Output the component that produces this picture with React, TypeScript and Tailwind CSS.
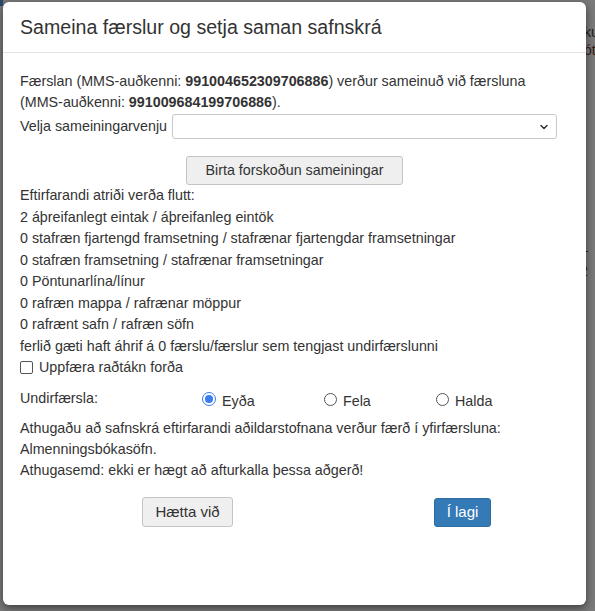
import { ChevronDown } from 'lucide-react';

const items = [
  'Eftirfarandi atriði verða flutt:',
  '2 áþreifanlegt eintak / áþreifanleg eintök',
  '0 stafræn fjartengd framsetning / stafrænar fjartengdar framsetningar',
  '0 stafræn framsetning / stafrænar framsetningar',
  '0 Pöntunarlína/línur',
  '0 rafræn mappa / rafrænar möppur',
  '0 rafrænt safn / rafræn söfn',
  'ferlið gæti haft áhrif á 0 færslu/færslur sem tengjast undirfærslunni',
];

function Radio({ label, checked }: { label: string; checked?: boolean }) {
  return (
    <label className="flex items-center gap-[6px]">
      {checked ? (
        <span className="flex h-[14px] w-[14px] items-center justify-center rounded-full border-[1.5px] border-[#3b7cf0]">
          <span className="h-[8px] w-[8px] rounded-full bg-[#3b7cf0]" />
        </span>
      ) : (
        <span className="h-[13px] w-[13px] rounded-full border border-[#555]" />
      )}
      <span className="mt-[3px]">{label}</span>
    </label>
  );
}

export default function App() {
  return (
    <div className="relative h-[611px] w-[595px] overflow-hidden bg-[#7a7a7a] font-['Liberation_Sans',Arial,sans-serif] text-[14.3px] text-[#333]">
      {/* page behind the overlay */}
      <div className="absolute left-[584px] top-[22px] text-[14px] text-[#1a1a1a]">ku</div>
      <div className="absolute left-[584px] top-[40px] text-[14px] text-[#3a1a10]">ótu</div>
      <div className="absolute left-[580px] top-[240px] text-[14px] text-[#1a1a1a]">– 2</div>
      <div className="absolute left-0 top-0 h-[6px] w-[3px] bg-[#2a4a6c]" />

      <div className="relative ml-[3px] mt-[2px] flex h-[603px] w-[583px] flex-col rounded-[6px] bg-white shadow-[0_3px_9px_rgba(0,0,0,0.5)]">
        <div className="flex h-[51px] items-center border-b border-[#e5e5e5] px-[17px]">
          <h4 className="text-[19.6px] leading-[20px] text-[#333]">Sameina færslur og setja saman safnskrá</h4>
        </div>

        <div className="px-[17px] pt-[18px] leading-[20.5px]">
          <p>
            Færslan (MMS-auðkenni: <b>991004652309706886</b>) verður sameinuð við færsluna
            <br />
            (MMS-auðkenni: <b>991009684199706886</b>).
          </p>
          <div className="mt-[2px] flex items-center gap-[5px]">
            <span>Velja sameiningarvenju</span>
            <div className="flex h-[25px] w-[385px] items-center justify-end rounded-[3px] border border-[#c8c8c8] pr-[6px]">
              <ChevronDown size={12} strokeWidth={3} className="text-[#333]" />
            </div>
          </div>
          <div className="mt-[17px] flex justify-center">
            <button
              type="button"
              className="h-[29px] w-[217px] rounded-[3px] border border-[#c4c4c4] bg-[#efefef] text-[14.3px] text-[#333]"
            >
              Birta forskoðun sameiningar
            </button>
          </div>

          <div className="leading-[21.5px]">
            {items.map((t) => (
              <div key={t}>{t}</div>
            ))}
            <label className="flex items-center gap-[6px]">
              <span className="h-[13px] w-[13px] rounded-[2px] border border-[#555]" />
              <span>Uppfæra raðtákn forða</span>
            </label>
          </div>

          <div className="mt-[9px] flex items-start">
            <span className="w-[182px]">Undirfærsla:</span>
            <div className="w-[122px]">
              <Radio label="Eyða" checked />
            </div>
            <div className="w-[112px]">
              <Radio label="Fela" />
            </div>
            <Radio label="Halda" />
          </div>

          <div className="mt-[7px] leading-[21px]">
            <div>Athugaðu að safnskrá eftirfarandi aðildarstofnana verður færð í yfirfærsluna:</div>
            <div>Almenningsbókasöfn.</div>
            <div>Athugasemd: ekki er hægt að afturkalla þessa aðgerð!</div>
          </div>

          <div className="mt-[16px] flex items-center">
            <button
              type="button"
              className="ml-[122px] h-[30px] w-[91px] rounded-[3px] border border-[#c4c4c4] bg-[#efefef] text-[15px] text-[#333]"
            >
              Hætta við
            </button>
            <button
              type="button"
              className="ml-[201px] h-[29px] w-[57px] rounded-[3px] border border-[#2e6da4] bg-[#337ab7] text-[15px] text-white"
            >
              Í lagi
            </button>
          </div>
        </div>
      </div>
    </div>
  );
}
